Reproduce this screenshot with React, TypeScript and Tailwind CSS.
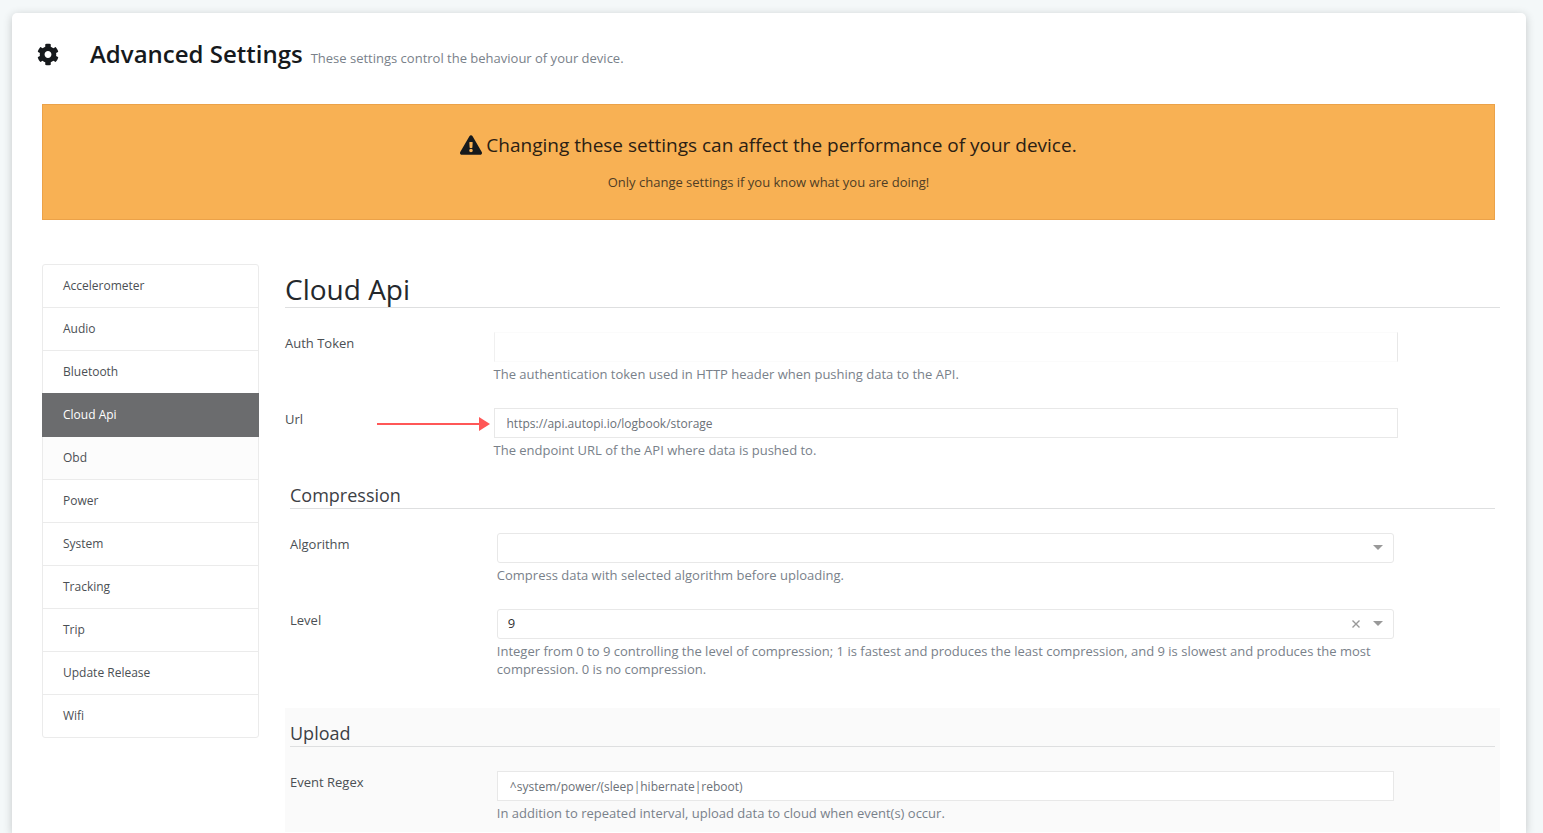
import { useState, type ReactNode } from "react";
import { FaCog, FaExclamationTriangle } from "react-icons/fa";

const categories = [
  "Accelerometer",
  "Audio",
  "Bluetooth",
  "Cloud Api",
  "Obd",
  "Power",
  "System",
  "Tracking",
  "Trip",
  "Update Release",
  "Wifi",
];

function Field({ id, label, help, marker, children }: {
  id: string;
  label: string;
  help: string;
  marker?: ReactNode;
  children: ReactNode;
}) {
  return (
    <div className="flex">
      <div className="relative w-1/6 shrink-0 pt-[2px]">
        <label htmlFor={id} className="block text-[13px] leading-[18px] text-[#4b4f54]">{label}</label>
        {marker}
      </div>
      <div className="w-3/4 pl-[6px] pr-px">
        {children}
        <p id={`${id}-help`} className="mt-[3px] text-[13px] leading-[18px] text-[#79818a]">{help}</p>
      </div>
    </div>
  );
}

function Arrow() {
  return (
    <svg className="absolute -right-[3px] top-2 h-4 w-[114px]" viewBox="0 0 114 16" aria-hidden="true">
      <path d="M0 8H103" stroke="#ff5757" strokeWidth="2" />
      <path d="M102 1L113 8L102 15Z" fill="#ff5757" />
    </svg>
  );
}

function Choice({ id, options, value, onChange, clearable }: {
  id: string;
  options: string[];
  value: string;
  onChange: (value: string) => void;
  clearable?: boolean;
}) {
  return (
    <div className="relative">
      <select
        id={id}
        value={value}
        aria-describedby={`${id}-help`}
        onChange={(e) => onChange(e.target.value)}
        className="block h-[30px] w-full appearance-none rounded-[3px] border border-[#e8e8e8] bg-white px-[10px] text-[13px] text-[#333]"
      >
        <option value=""></option>
        {options.map((o) => (
          <option key={o} value={o}>{o}</option>
        ))}
      </select>
      {clearable && value !== "" && (
        <button
          type="button"
          aria-label="Clear"
          onClick={() => onChange("")}
          className="absolute right-8 top-2 flex h-[14px] w-[12px] items-center justify-center"
        >
          <svg className="h-2 w-2" viewBox="0 0 8 8" aria-hidden="true">
            <path d="M0.5 0.5L7.5 7.5M7.5 0.5L0.5 7.5" stroke="#999" strokeWidth="1.4" />
          </svg>
        </button>
      )}
      <svg className="pointer-events-none absolute right-[11px] top-3 h-[5px] w-[10px]" viewBox="0 0 10 5" aria-hidden="true">
        <path d="M0 0H10L5 5Z" fill="#999" />
      </svg>
    </div>
  );
}

function Section({ title, shaded, children }: { title: string; shaded?: boolean; children: ReactNode }) {
  return (
    <section className={shaded ? "mt-[11px] bg-[#fafafa] px-[5px] pb-[10px] pt-3" : "mt-[11px] px-[5px] pb-[19px] pt-3"}>
      <h3 className="border-b border-[#dedfe0] text-[18px] leading-[26px] text-[#3c4045]">{title}</h3>
      <div className="mt-6 flex flex-col gap-[25px]">{children}</div>
    </section>
  );
}

export default function App() {
  const [active, setActive] = useState("Cloud Api");
  const [algorithm, setAlgorithm] = useState("");
  const [level, setLevel] = useState("9");

  return (
    <div className="flex min-h-screen flex-col bg-[#f4f8f9] pl-3 pr-[17px] pt-[13px] font-['Open_Sans',sans-serif]">
      <div className="grow rounded-t-[5px] bg-white pl-[30px] pr-[26px] shadow-[0_2px_10px_rgba(0,0,0,0.2)]">
        <header className="-ml-[5px] flex items-center pt-[23px]">
          <FaCog className="h-[23px] w-[22px] text-[#16191c]" aria-hidden="true" />
          <div className="ml-[31px] flex items-baseline gap-2">
            <h1 className="text-[24px] font-semibold leading-9 text-[#16191c]">Advanced Settings</h1>
            <span className="text-[13px] text-[#79818a]">These settings control the behaviour of your device.</span>
          </div>
        </header>

        <div role="alert" className="mr-[5px] mt-8 flex flex-col items-center border border-[#eba249] bg-[#f8b154] pb-[27px] pt-[26px]">
          <h2 className="flex items-center gap-1 text-[19px] leading-[28px] text-[#2b2013]">
            <FaExclamationTriangle className="h-5 w-[22px] text-[#16191c]" aria-hidden="true" />
            Changing these settings can affect the performance of your device.
          </h2>
          <p className="mt-[13px] text-[13px] leading-5 text-[#4f3d25]">Only change settings if you know what you are doing!</p>
        </div>

        <div className="mt-11 flex items-start gap-[26px]">
          <nav aria-label="Settings" className="flex w-[217px] shrink-0 flex-col rounded-[3px] border border-[#ebebeb]">
            {categories.map((name, i) => (
              <button
                key={name}
                type="button"
                aria-current={name === active ? "page" : undefined}
                onClick={() => setActive(name)}
                className={
                  name === active
                    ? "-mx-px -mt-px h-11 bg-[#6b6c6e] pl-[21px] text-left text-[12px] text-white"
                    : i === categories.length - 1
                      ? "h-[42px] pl-5 text-left text-[12px] text-[#4b4f54]"
                      : name === "Obd"
                        ? "h-[43px] border-b border-[#ebebeb] bg-[#fcfcfc] pl-5 text-left text-[12px] text-[#4b4f54]"
                        : "h-[43px] border-b border-[#ebebeb] pl-5 text-left text-[12px] text-[#4b4f54]"
                }
              >
                {name}
              </button>
            ))}
          </nav>

          <main className="min-w-0 grow">
            <h2 className="border-b border-[#dedfe0] pb-px pt-2 text-[28px] leading-[34px] text-[#24282c]">Cloud Api</h2>
            <div className="mt-6 flex flex-col gap-[25px]">
              <Field id="token" label="Auth Token" help="The authentication token used in HTTP header when pushing data to the API.">
                <input
                  id="token"
                  type="text"
                  aria-describedby="token-help"
                  className="block h-[30px] w-full border border-y-[#fbfbfb] border-l-[#f0f0f0] border-r-[#e8e8e8] px-3 text-[13px] text-[#6b7178]"
                />
              </Field>
              <Field
                id="url"
                label="Url"
                help="The endpoint URL of the API where data is pushed to."
                marker={<Arrow />}
              >
                <input
                  id="url"
                  type="text"
                  defaultValue="https://api.autopi.io/logbook/storage"
                  aria-describedby="url-help"
                  className="block h-[30px] w-full border border-[#e8e8e8] px-3 text-[12px] text-[#6b7178]"
                />
              </Field>
            </div>

            <Section title="Compression">
              <Field id="algorithm" label="Algorithm" help="Compress data with selected algorithm before uploading.">
                <Choice id="algorithm" options={["bz2", "gzip", "zlib"]} value={algorithm} onChange={setAlgorithm} />
              </Field>
              <Field
                id="level"
                label="Level"
                help="Integer from 0 to 9 controlling the level of compression; 1 is fastest and produces the least compression, and 9 is slowest and produces the most compression. 0 is no compression."
              >
                <Choice
                  id="level"
                  options={["0", "1", "2", "3", "4", "5", "6", "7", "8", "9"]}
                  value={level}
                  onChange={setLevel}
                  clearable
                />
              </Field>
            </Section>

            <Section title="Upload" shaded>
              <Field id="regex" label="Event Regex" help="In addition to repeated interval, upload data to cloud when event(s) occur.">
                <input
                  id="regex"
                  type="text"
                  defaultValue="^system/power/(sleep|hibernate|reboot)"
                  aria-describedby="regex-help"
                  className="block h-[30px] w-full border border-[#e8e8e8] bg-white px-3 text-[12px] text-[#6b7178]"
                />
              </Field>
            </Section>
          </main>
        </div>
      </div>
    </div>
  );
}
